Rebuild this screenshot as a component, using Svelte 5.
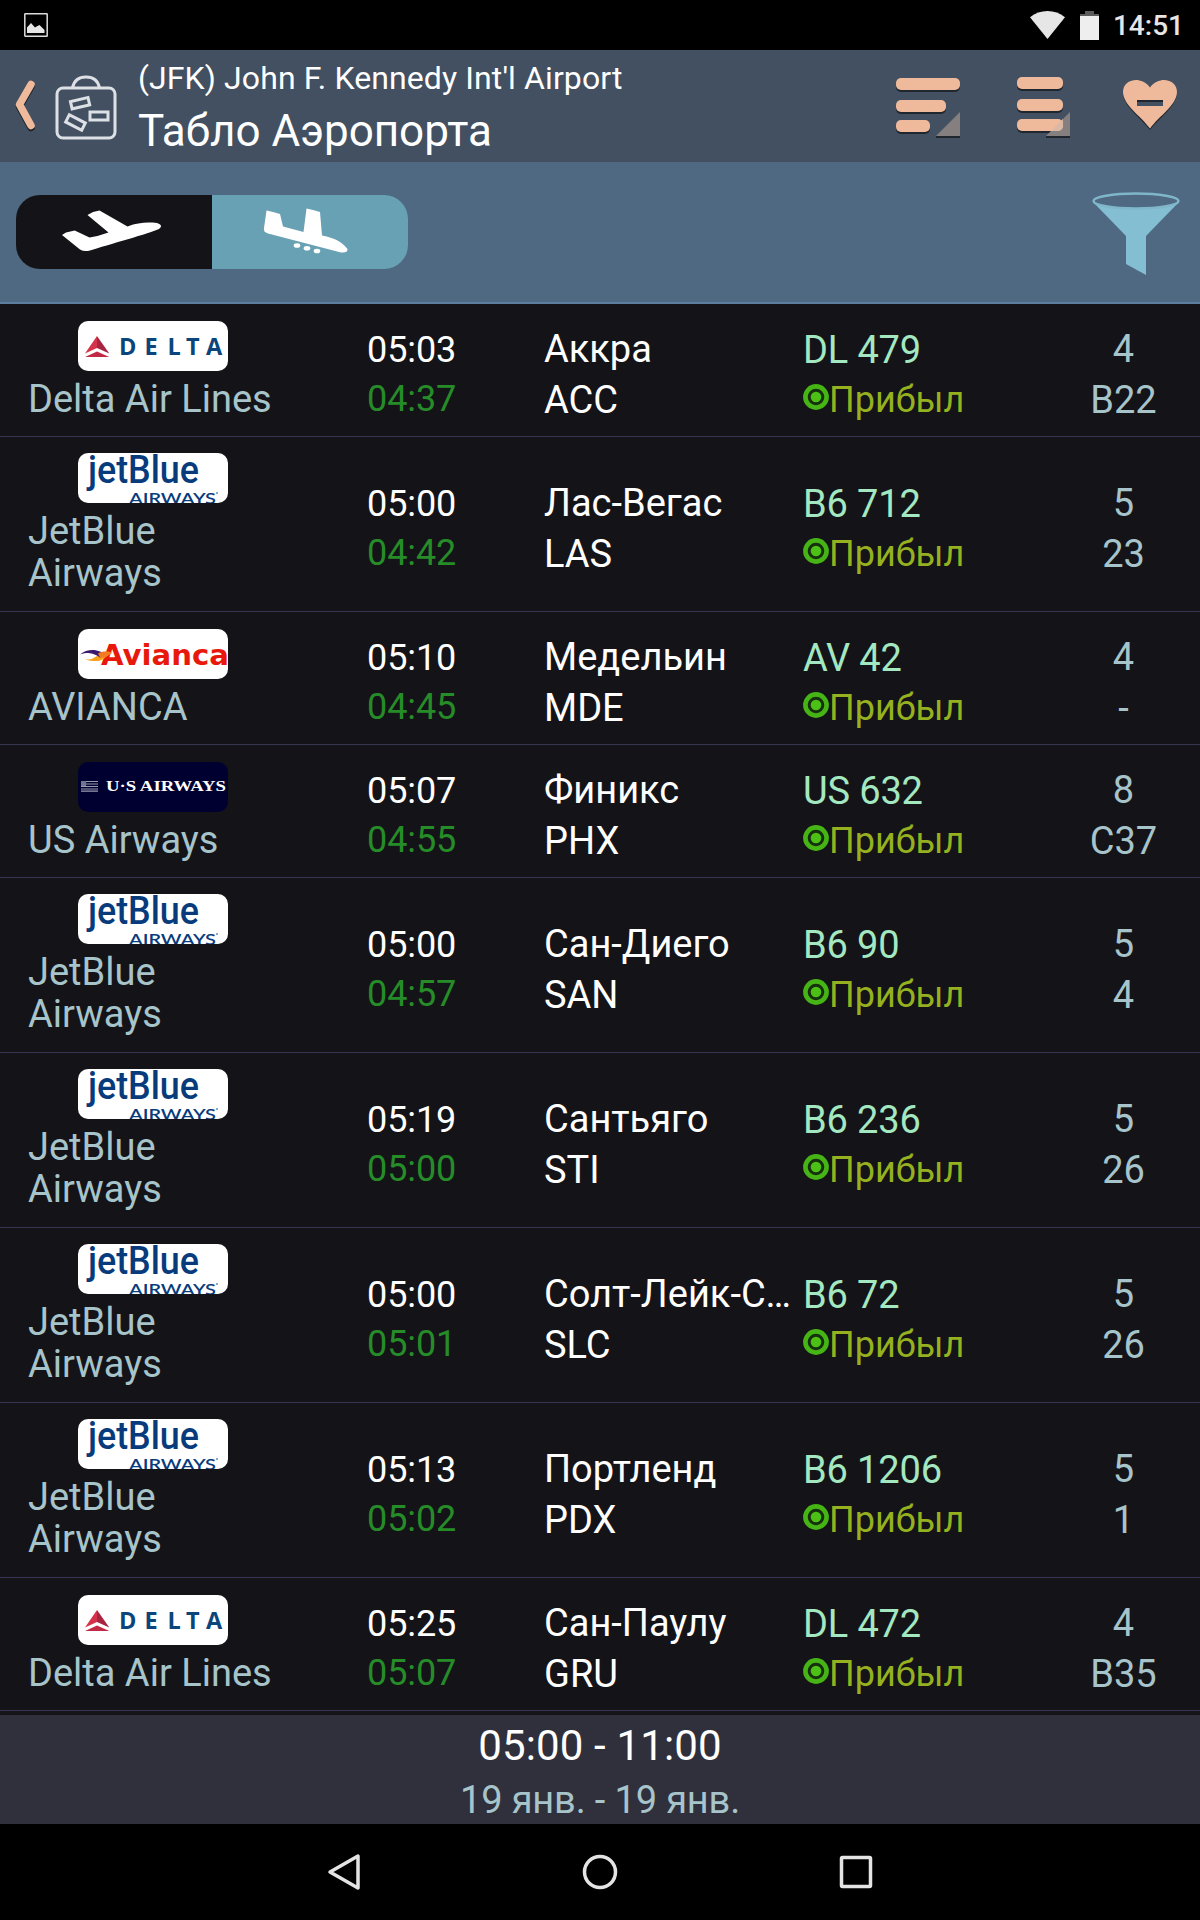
<script lang="ts">
  type Flight = {
    airline: string;
    logo: string;
    planned: string;
    actual: string;
    city: string;
    code: string;
    number: string;
    terminal: string;
    gate: string;
  };

  const flight = (
    airline: string,
    logo: string,
    planned: string,
    actual: string,
    city: string,
    code: string,
    number: string,
    terminal: string,
    gate: string
  ): Flight => ({ airline, logo, planned, actual, city, code, number, terminal, gate });

  let flights: Flight[] = [
    flight("Delta Air Lines", "delta", "05:03", "04:37", "Аккра", "ACC", "DL 479", "4", "B22"),
    flight("JetBlue Airways", "jetblue", "05:00", "04:42", "Лас-Вегас", "LAS", "B6 712", "5", "23"),
    flight("AVIANCA", "avianca", "05:10", "04:45", "Медельин", "MDE", "AV 42", "4", "-"),
    flight("US Airways", "us", "05:07", "04:55", "Финикс", "PHX", "US 632", "8", "C37"),
    flight("JetBlue Airways", "jetblue", "05:00", "04:57", "Сан-Диего", "SAN", "B6 90", "5", "4"),
    flight("JetBlue Airways", "jetblue", "05:19", "05:00", "Сантьяго", "STI", "B6 236", "5", "26"),
    flight("JetBlue Airways", "jetblue", "05:00", "05:01", "Солт-Лейк-С…", "SLC", "B6 72", "5", "26"),
    flight("JetBlue Airways", "jetblue", "05:13", "05:02", "Портленд", "PDX", "B6 1206", "5", "1"),
    flight("Delta Air Lines", "delta", "05:25", "05:07", "Сан-Паулу", "GRU", "DL 472", "4", "B35"),
  ];

  let mode = $state("arrivals");
</script>

<div class="screen">
  <div class="status">
    <svg class="picture" width="24" height="28" viewBox="0 0 24 28">
      <rect x="0.8" y="2.800" width="22.400" height="22.400" rx="0.500" fill="none" stroke="#dcdcdc" stroke-width="1.500" />
      <path d="M3 22v-5.500l4-4.500 4 4.500 1.500-1 3-1.500 5 5v3z" fill="#e6e6e6" />
    </svg>
    <svg width="35" height="28" viewBox="0 0 35 28">
      <path d="M0 6.300C10-2 25-2 35 6.300L17.500 28z" fill="#e6e6e6" />
    </svg>
    <svg class="battery" width="19" height="29" viewBox="0 0 19 29">
      <path d="M5 0h9v3h5v3H0V3h5z" fill="#5c5c5c" />
      <path d="M0 5h19v24H0z" fill="#eee" />
    </svg>
    <span>14:51</span>
  </div>

  <header>
    <svg class="back" width="24" height="54" viewBox="0 0 24 54">
      <path d="M18 7.500 6.500 27.500l11.500 21" fill="none" stroke="#1d242c" stroke-width="7.500" stroke-linecap="round" stroke-linejoin="round" />
      <path d="M18 5.500 6.500 25.500l11.500 21" fill="none" stroke="#efba9b" stroke-width="7.500" stroke-linecap="round" stroke-linejoin="round" />
    </svg>
    <svg class="bag" width="62" height="66" viewBox="0 0 62 66" fill="none" stroke="#dde1e5" stroke-width="3">
      <path d="M17.500 13C19 5 24 2 31 2s12 3 13.500 11" />
      <rect x="2" y="13" width="58" height="50" rx="6" />
      <rect x="16" y="24.500" width="18" height="7.500" transform="rotate(-13 25 28)" />
      <rect x="35" y="37" width="18" height="8" />
      <rect x="11.500" y="43.500" width="18" height="8" transform="rotate(27 20.500 47.500)" />
    </svg>
    <div class="titles">
      <div class="airport">(JFK) John F. Kennedy Int'l Airport</div>
      <h1>Табло Аэропорта</h1>
    </div>
    <div class="actions">
      <svg width="64" height="62" viewBox="0 0 64 62">
        <g fill="#1f262e">
          <rect y="4" width="64" height="12" rx="5" />
          <rect y="26" width="50" height="12" rx="5" />
          <rect y="46" width="34" height="12" rx="5" />
          <rect x="40" y="60" width="24" height="2" />
        </g>
        <path d="M64 36v24H40z" fill="#85807f" />
        <g fill="#efba9b">
          <rect y="2" width="64" height="12" rx="5" />
          <rect y="24" width="50" height="12" rx="5" />
          <rect y="44" width="34" height="12" rx="5" />
        </g>
      </svg>
      <svg width="54" height="62" viewBox="0 0 54 62">
        <g fill="#1f262e">
          <rect y="3" width="46" height="12" rx="5" />
          <rect y="25" width="46" height="12" rx="5" />
          <rect y="45" width="46" height="12" rx="5" />
          <rect x="29" y="60" width="24" height="2" />
        </g>
        <path d="M53 36v24H29z" fill="#85807f" />
        <g fill="#efba9b">
          <rect y="1" width="46" height="12" rx="5" />
          <rect y="23" width="46" height="12" rx="5" />
          <rect y="43" width="46" height="12" rx="5" />
        </g>
        <path d="M46 43v6a5.500 5.500 0 0 1-5 6h-7z" fill="#dab9a4" />
      </svg>
      <svg width="54" height="62" viewBox="0 0 54 62">
        <path d="M27 12C23 6 18 4 13 4 5 4 0 10 0 17c0 13 18 25 27 37 9-12 27-24 27-37 0-7-5-13-13-13-5 0-10 2-14 8z" fill="#1f262e" />
        <path d="M27 11.500C23 6 18 4 13 4 5 4 0 9 0 16c0 13 18 24 27 36.500C36 40 54 29 54 16c0-7-5-12-13-12-5 0-10 2-14 7.500z" fill="#efba9b" />
        <rect x="14" y="24" width="26" height="6" fill="#425061" />
        <rect x="14" y="24" width="26" height="2" fill="#1f262e" />
      </svg>
    </div>
  </header>

  <div class="toolbar">
    <div class="toggle">
      <button class:on={mode == "departures"} aria-label="Вылет" onclick={() => (mode = "departures")}>
        <svg width="196" height="74" viewBox="0 0 196 74" fill="#fff">
          <path d="M46 40 50 37.500 58.700 35.500 73.500 42.500Q83 41 92.500 37.500L71.500 20 77 17 83.500 15.500 111.500 31.500C122 27.500 131 27 141 28Q148 30 143 34C135 38 91 50 74 55.500Q68 57 64 54.500z" />
        </svg>
      </button>
      <button class:on={mode == "arrivals"} aria-label="Прилёт" onclick={() => (mode = "arrivals")}>
        <svg width="196" height="74" viewBox="0 0 196 74" fill="#fff">
          <path d="M54.500 15.500 61 17 68 19 71 31.500 91.500 37 94.500 13.500 101 15 108 17 110 40.500C123 43 130 47 135.500 54Q136 58 129 57.500L56 38.500Q51 37 52 33z" />
          <ellipse cx="85" cy="50.500" rx="3.300" ry="2.300" />
          <ellipse cx="95" cy="53.300" rx="3.300" ry="2.300" />
          <ellipse cx="105" cy="56" rx="3.300" ry="2.300" />
        </svg>
      </button>
    </div>
    <svg width="88" height="84" viewBox="0 0 88 84">
      <path d="M1 10 34 44v28l20 11V44l33-34L74 13Q44 20 14 13z" fill="#84bed2" />
      <ellipse cx="44" cy="9" rx="42.500" ry="7.500" fill="#4f6982" stroke="#7fb6ca" stroke-width="2.500" />
    </svg>
  </div>

  <main>
    {#each flights as f}
      <div class="row" class:tall={f.logo == "jetblue"}>
        <div class="airline">
          <svg class="logo" width="150" height="50" viewBox="0 0 150 50">
            {#if f.logo == "delta"}
              <rect width="150" height="50" fill="#fff" />
              <path d="M19 15 7 32.500l12-5.500z" fill="#d5334a" />
              <path d="M19 15l12.300 17.500L19 27z" fill="#a82441" />
              <path d="M7 36l12-5.500L31.300 36z" fill="#c02a44" />
              <g class="delta-word">
                <text x="41" y="34">D</text>
                <text x="66.500" y="34">E</text>
                <text x="89.500" y="34">L</text>
                <text x="108" y="34">T</text>
                <text x="128" y="34">A</text>
              </g>
            {:else if f.logo == "jetblue"}
              <rect width="150" height="50" fill="#fff" />
              <text class="jet-word" x="10" y="29.500" textLength="111" lengthAdjust="spacingAndGlyphs">jetBlue</text>
              <text class="jet-sub" x="51" y="51" textLength="87" lengthAdjust="spacingAndGlyphs">AIRWAYS</text>
              <circle cx="139" cy="40" r="0.800" fill="#073b7c" />
            {:else if f.logo == "avianca"}
              <rect width="150" height="50" fill="#fff" />
              <text class="avianca-word" x="23" y="36" textLength="128" lengthAdjust="spacingAndGlyphs">Avianca</text>
              <path d="M7 30c8 2 12-4 17-6 4-2 7-1 10 0-6 3-9 8-15 8-5 0-8 0-12-2z" fill="#f9a01b" />
              <path d="M2 25.500C8 20 17 20 22 22.500l7 3-7 3C17 25 12 22 2 25.500z" fill="#3b1a6e" />
              <path d="M20 24.500c5-3 10-2 14-1-5 4-8 6-12 5z" fill="#f47b20" />
            {:else}
              <rect width="150" height="50" fill="#000030" />
              <path d="M3 19.500h17M3 22h17M3 24.500h17M3 27h17M3 29.200h17" stroke="#9a9cb0" stroke-width="1.200" />
              <rect x="3" y="19" width="5" height="5" fill="#70748f" />
              <text class="us-word" x="28" y="29" textLength="120" lengthAdjust="spacingAndGlyphs">U·S AIRWAYS</text>
            {/if}
          </svg>
          <div class="name">{f.airline}</div>
        </div>
        <div class="time">
          <div>{f.planned}</div>
          <div class="actual">{f.actual}</div>
        </div>
        <div class="city">
          <div>{f.city}</div>
          <div>{f.code}</div>
        </div>
        <div class="number">
          <div>{f.number}</div>
          <div class="state">
            <svg width="26" height="26" viewBox="0 0 26 26">
              <circle cx="13" cy="13" r="10.600" fill="#16300f" stroke="#45b414" stroke-width="4.600" />
              <circle cx="13" cy="13" r="5.300" fill="#4cc015" />
            </svg>
            <span>Прибыл</span>
          </div>
        </div>
        <div class="gate">
          <div>{f.terminal}</div>
          <div>{f.gate}</div>
        </div>
      </div>
    {/each}
  </main>

  <footer>
    <div class="hours">05:00 - 11:00</div>
    <div class="dates">19 янв. - 19 янв.</div>
  </footer>

  <nav>
    <svg width="40" height="40" viewBox="0 0 40 40">
      <path d="M34 4v32L6 20z" />
    </svg>
    <svg width="40" height="40" viewBox="0 0 40 40">
      <circle cx="20" cy="20" r="15.500" />
    </svg>
    <svg width="40" height="40" viewBox="0 0 40 40">
      <rect x="5.500" y="5.500" width="29" height="29" rx="1" />
    </svg>
  </nav>
</div>

<style>
  :global(body) {
    background-color: #141318;
  }

  .screen {
    display: flex;
    flex-direction: column;
    width: 1200px;
    height: 1920px;
    overflow: hidden;
    background-color: #141318;
    color: #fff;
    font-family: Roboto, sans-serif;
  }

  svg {
    display: block;
    flex: none;
  }

  .status {
    display: flex;
    align-items: center;
    box-sizing: border-box;
    height: 50px;
    padding: 0 16px 0 24px;
    background-color: #000;
    color: #e6e6e6;
    font-size: 28px;
    font-weight: 500;
  }
  .status .picture {
    margin-right: auto;
  }
  .battery {
    margin: 0 14px 0 15px;
  }
  .status span {
    padding-top: 2px;
    line-height: 32px;
  }

  header {
    display: flex;
    box-sizing: border-box;
    height: 112px;
    padding: 0 23px 0 13px;
    background-color: #425061;
  }
  .back {
    margin-top: 29px;
  }
  .bag {
    margin: 25px 0 0 18px;
  }
  .titles {
    margin-left: 21px;
    padding-top: 9px;
    white-space: nowrap;
  }
  .airport {
    font-size: 32px;
    letter-spacing: 0.100px;
    line-height: 38px;
  }
  h1 {
    margin: 8px 0 0;
    font-size: 44px;
    font-weight: 400;
    line-height: 52px;
  }
  .actions {
    display: flex;
    gap: 52px;
    margin: 26px 0 0 auto;
  }
  .actions svg:first-child {
    margin-right: 5px;
  }

  .toolbar {
    display: flex;
    justify-content: space-between;
    box-sizing: border-box;
    height: 142px;
    padding: 30px 20px 0 16px;
    border-bottom: 2px solid #5d7e9f;
    background-color: #4f6982;
  }
  .toggle {
    display: flex;
    height: 74px;
    margin-top: 3px;
    border-radius: 24px;
    overflow: hidden;
  }
  .toggle button {
    padding: 0;
    border: 0;
    background-color: #141318;
  }
  .toggle button.on {
    background-color: #68a1b3;
  }

  main {
    height: 1411px;
  }
  .row {
    display: grid;
    grid-template-columns: 250px 89px 177px 259px 240px 161px;
    align-items: center;
    box-sizing: border-box;
    height: 133px;
    padding-left: 28px;
    border-bottom: 1px solid #363652;
    font-size: 38px;
  }
  .row.tall {
    height: 175px;
  }
  .airline {
    grid-column: 1;
    align-self: start;
    padding-top: 17px;
  }
  .tall .airline {
    padding-top: 16px;
  }
  .logo {
    margin: 0 auto 7px;
    border-radius: 10px;
    overflow: hidden;
  }
  .name {
    color: #a6c4ca;
    font-size: 38px;
    line-height: 42px;
  }
  .time,
  .city,
  .number,
  .gate {
    padding-top: 10px;
  }
  .time {
    grid-column: 3;
    font-size: 36px;
    letter-spacing: -0.100px;
    line-height: 49px;
  }
  .actual {
    color: #268c28;
  }
  .city {
    line-height: 51px;
  }
  .city div {
    width: 251px;
    overflow: hidden;
    text-overflow: ellipsis;
    white-space: nowrap;
  }
  .number {
    color: #a3e8c0;
    letter-spacing: -0.150px;
    line-height: 50px;
  }
  .state {
    display: flex;
    color: #95b11f;
    font-size: 36px;
    letter-spacing: 0;
  }
  .state svg {
    margin: 9px 0 0;
  }
  .gate {
    color: #a6c4ca;
    line-height: 51px;
    text-align: center;
  }

  .delta-word {
    fill: #0b457b;
    font: 700 23.500px "Open Sans", sans-serif;
  }
  .jet-word {
    fill: #073b7c;
    font: 500 38px Roboto, sans-serif;
  }
  .jet-sub {
    fill: #073b7c;
    font: 600 16px Lato, sans-serif;
  }
  .avianca-word {
    fill: #e8190c;
    font: 700 29px "DejaVu Sans", sans-serif;
  }
  .us-word {
    fill: #fff;
    font: 700 15.500px "Liberation Serif", serif;
  }

  footer {
    box-sizing: border-box;
    height: 109px;
    padding-top: 6px;
    background-color: #30303c;
    text-align: center;
  }
  .hours {
    font-size: 42px;
    letter-spacing: 0.150px;
    line-height: 50px;
  }
  .dates {
    margin-top: 6px;
    color: #a6c4ca;
    font-size: 38px;
    letter-spacing: -0.150px;
    line-height: 46px;
  }

  nav {
    display: flex;
    justify-content: center;
    align-items: center;
    gap: 216px;
    height: 96px;
    background-color: #000;
  }
  nav svg {
    fill: none;
    stroke: #e4e4e4;
    stroke-width: 3.500;
    stroke-linejoin: round;
  }
</style>
